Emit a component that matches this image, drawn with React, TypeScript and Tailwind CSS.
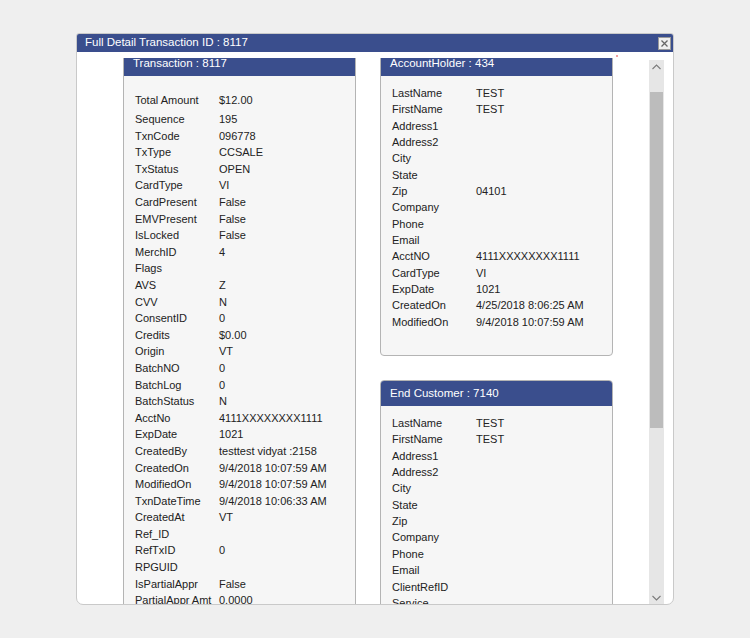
import React from "react";

type Row = [string, string];

const txnRows: Row[] = [
  ["Sequence", "195"],
  ["TxnCode", "096778"],
  ["TxType", "CCSALE"],
  ["TxStatus", "OPEN"],
  ["CardType", "VI"],
  ["CardPresent", "False"],
  ["EMVPresent", "False"],
  ["IsLocked", "False"],
  ["MerchID", "4"],
  ["Flags", ""],
  ["AVS", "Z"],
  ["CVV", "N"],
  ["ConsentID", "0"],
  ["Credits", "$0.00"],
  ["Origin", "VT"],
  ["BatchNO", "0"],
  ["BatchLog", "0"],
  ["BatchStatus", "N"],
  ["AcctNo", "4111XXXXXXXX1111"],
  ["ExpDate", "1021"],
  ["CreatedBy", "testtest vidyat :2158"],
  ["CreatedOn", "9/4/2018 10:07:59 AM"],
  ["ModifiedOn", "9/4/2018 10:07:59 AM"],
  ["TxnDateTime", "9/4/2018 10:06:33 AM"],
  ["CreatedAt", "VT"],
  ["Ref_ID", ""],
  ["RefTxID", "0"],
  ["RPGUID", ""],
  ["IsPartialAppr", "False"],
  ["PartialAppr Amt", "0.0000"],
];

const holderRows: Row[] = [
  ["LastName", "TEST"],
  ["FirstName", "TEST"],
  ["Address1", ""],
  ["Address2", ""],
  ["City", ""],
  ["State", ""],
  ["Zip", "04101"],
  ["Company", ""],
  ["Phone", ""],
  ["Email", ""],
  ["AcctNO", "4111XXXXXXXX1111"],
  ["CardType", "VI"],
  ["ExpDate", "1021"],
  ["CreatedOn", "4/25/2018 8:06:25 AM"],
  ["ModifiedOn", "9/4/2018 10:07:59 AM"],
];

const customerRows: Row[] = [
  ["LastName", "TEST"],
  ["FirstName", "TEST"],
  ["Address1", ""],
  ["Address2", ""],
  ["City", ""],
  ["State", ""],
  ["Zip", ""],
  ["Company", ""],
  ["Phone", ""],
  ["Email", ""],
  ["ClientRefID", ""],
  ["Service", ""],
];

function DataRow({ label, value, h }: { label: string; value: string; h: string }) {
  return (
    <div className={`flex items-center ${h}`}>
      <span className="w-[84px] shrink-0 whitespace-nowrap">{label}</span>
      <span className="whitespace-nowrap">{value}</span>
    </div>
  );
}

function Panel({
  title,
  children,
  className = "",
}: {
  title: string;
  children: React.ReactNode;
  className?: string;
}) {
  return (
    <div className={`w-[233px] rounded-[4px] border border-[#b4b4b4] bg-[#f6f6f6] overflow-hidden ${className}`}>
      <div className="h-[25px] bg-[#3a4e8d] text-white text-[11.5px] flex items-center px-[9px]">{title}</div>
      {children}
    </div>
  );
}

export default function App() {
  return (
    <div
      className="min-h-[638px] bg-[#efefef] pt-[33px] pl-[76px] text-[#222]"
      style={{ fontFamily: '"Liberation Sans", Arial, sans-serif' }}
    >
      <div className="relative w-[598px] h-[572px] bg-white border border-[#c9c9c9] rounded-b-[7px] rounded-t-[3px] overflow-hidden">
        {/* title bar */}
        <div className="h-[18px] bg-[#3a4e8d] flex items-center justify-between pl-[8px] pr-[2px]">
          <span className="text-white text-[11.5px]">Full Detail Transaction ID : 8117</span>
          <span className="w-[13px] h-[13px] bg-[#efefef] border border-[#9a9a9a] flex items-center justify-center">
            <svg width="7" height="7" viewBox="0 0 7 7">
              <path d="M0.5 0.5 L6.5 6.5 M6.5 0.5 L0.5 6.5" stroke="#666" strokeWidth="1.3" />
            </svg>
          </span>
        </div>
        <span className="absolute left-[539px] top-[21px] w-[2px] h-[2px] bg-[#f3a0a0]" />

        {/* body */}
        <div className="flex">
          <div className="mt-[6px] h-[547px] flex-1 overflow-hidden">
            <div className="-mt-[8px] pl-[46px] flex gap-[24px] text-[11px]">
              <Panel title="Transaction : 8117">
                <div className="pt-[14px] pb-[20px] px-[11px]">
                  <DataRow label="Total Amount" value="$12.00" h="h-[21px]" />
                  {txnRows.map(([l, v]) => (
                    <DataRow key={l} label={l} value={v} h="h-[16.6px]" />
                  ))}
                </div>
              </Panel>
              <div className="flex flex-col">
                <Panel title="AccountHolder : 434">
                  <div className="pt-[9px] pb-[25px] px-[11px]">
                    {holderRows.map(([l, v]) => (
                      <DataRow key={l} label={l} value={v} h="h-[16.35px]" />
                    ))}
                  </div>
                </Panel>
                <Panel title="End Customer : 7140" className="mt-[24px]">
                  <div className="pt-[9px] pb-[25px] px-[11px]">
                    {customerRows.map(([l, v]) => (
                      <DataRow key={l} label={l} value={v} h="h-[16.35px]" />
                    ))}
                  </div>
                </Panel>
              </div>
            </div>
          </div>

          {/* scrollbar */}
          <div className="mt-[8px] mr-[9px] w-[15px] h-[545px] bg-[#e6e6e6] flex flex-col">
            <div className="h-[32px] flex justify-center pt-[4px]">
              <svg width="9" height="6" viewBox="0 0 9 6">
                <path d="M0.5 5 L4.5 1 L8.5 5" stroke="#7a7a7a" strokeWidth="1.1" fill="none" />
              </svg>
            </div>
            <div className="h-[336px] mx-[1px] bg-[#bcbcbc]" />
            <div className="flex-1 flex items-end justify-center pb-[4px]">
              <svg width="9" height="6" viewBox="0 0 9 6">
                <path d="M0.5 1 L4.5 5 L8.5 1" stroke="#7a7a7a" strokeWidth="1.1" fill="none" />
              </svg>
            </div>
          </div>
        </div>
      </div>
    </div>
  );
}
